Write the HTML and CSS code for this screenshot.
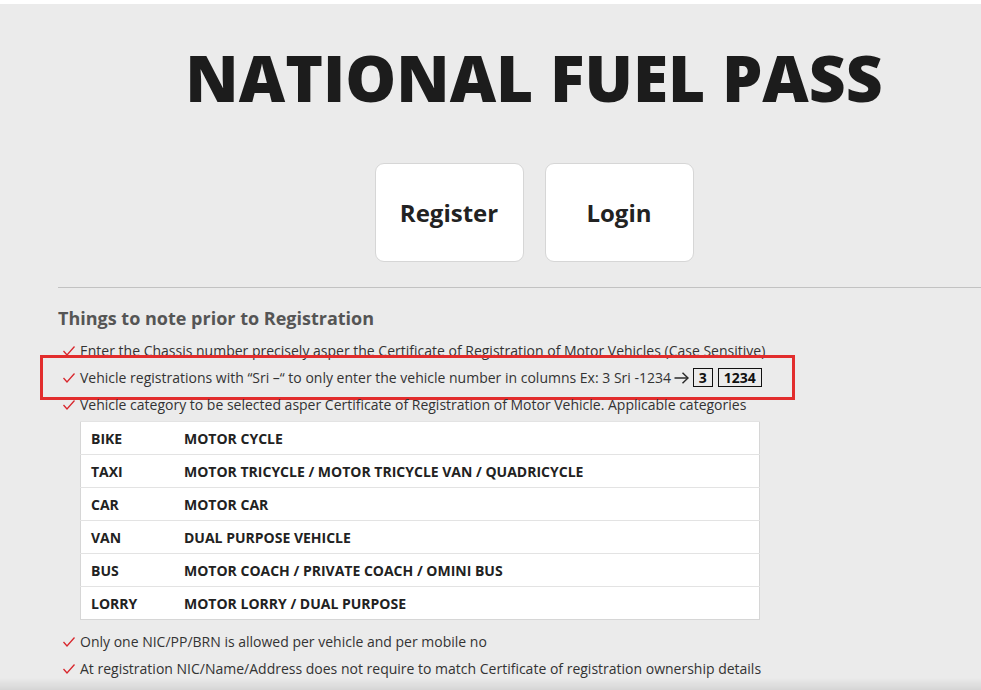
FILE: index.html
```html
<!DOCTYPE html>
<html lang="en">
<head>
<meta charset="utf-8">
<title>National Fuel Pass</title>
<link rel="stylesheet" href="styles.css">
</head>
<body>
<div class="page">
  <div class="container">
    <h1 class="title">NATIONAL FUEL PASS</h1>
    <div class="actions">
      <a class="action-btn" href="#">Register</a>
      <a class="action-btn" href="#">Login</a>
    </div>
    <hr class="divider">
    <h2 class="notes-title">Things to note prior to Registration</h2>
    <ul class="notes">
      <li class="note"><svg class="tick" viewBox="0 0 12 10"><polyline points="0.5,5 4,9 11.5,0.5"/></svg>Enter the Chassis number precisely asper the Certificate of Registration of Motor Vehicles (Case Sensitive)</li>
      <li class="note note-highlight"><svg class="tick" viewBox="0 0 12 10"><polyline points="0.5,5 4,9 11.5,0.5"/></svg>Vehicle registrations with “Sri –“ to only enter the vehicle number in columns Ex: 3 Sri -1234&nbsp;<svg class="arrow" viewBox="0 0 15 12"><line x1="0.5" y1="6" x2="14" y2="6"/><polyline points="8.5,0.8 14,6 8.5,11.2"/></svg><span class="num-box">3</span><span class="num-box">1234</span></li>
      <li class="note"><svg class="tick" viewBox="0 0 12 10"><polyline points="0.5,5 4,9 11.5,0.5"/></svg>Vehicle category to be selected asper Certificate of Registration of Motor Vehicle. Applicable categories</li>
    </ul>
    <table class="categories">
      <tr><td class="cat">BIKE</td><td>MOTOR CYCLE</td></tr>
      <tr><td class="cat">TAXI</td><td>MOTOR TRICYCLE / MOTOR TRICYCLE VAN / QUADRICYCLE</td></tr>
      <tr><td class="cat">CAR</td><td>MOTOR CAR</td></tr>
      <tr><td class="cat">VAN</td><td>DUAL PURPOSE VEHICLE</td></tr>
      <tr><td class="cat">BUS</td><td>MOTOR COACH / PRIVATE COACH / OMINI BUS</td></tr>
      <tr><td class="cat">LORRY</td><td>MOTOR LORRY / DUAL PURPOSE</td></tr>
    </table>
    <ul class="notes notes-after">
      <li class="note"><svg class="tick" viewBox="0 0 12 10"><polyline points="0.5,5 4,9 11.5,0.5"/></svg>Only one NIC/PP/BRN is allowed per vehicle and per mobile no</li>
      <li class="note"><svg class="tick" viewBox="0 0 12 10"><polyline points="0.5,5 4,9 11.5,0.5"/></svg>At registration NIC/Name/Address does not require to match Certificate of registration ownership details</li>
    </ul>
  </div>
  <div class="bottom-fade"></div>
</div>
</body>
</html>
```

FILE: styles.css
```css
html, body {
  margin: 0;
  padding: 0;
  background: #ffffff;
  overflow: hidden;
}
body {
  font-family: "Open Sans", "Liberation Sans", sans-serif;
  color: #333333;
}
.page {
  margin-top: 4px;
  background: #ebebeb;
  min-height: 686px;
  overflow: hidden;
}
.container {
  margin-left: 58px;
  width: 952px;
  padding-top: 42px;
}
.title {
  margin: 0;
  text-align: center;
  font-size: 64px;
  line-height: 64px;
  font-weight: 800;
  color: #1c1c1c;
  letter-spacing: 0;
}
.actions {
  display: flex;
  justify-content: center;
  gap: 21px;
  margin-top: 53px;
}
.action-btn {
  display: flex;
  align-items: center;
  justify-content: center;
  width: 147px;
  height: 97px;
  background: #ffffff;
  border: 1px solid #d6d6d6;
  border-radius: 9px;
  font-size: 24px;
  font-weight: 700;
  color: #222222;
  text-decoration: none;
}
.divider {
  margin: 25px 0 0 0;
  border: 0;
  border-top: 1px solid #c2c2c2;
  height: 0;
}
.notes-title {
  margin: 18px 0 0 0;
  font-size: 18px;
  line-height: 24px;
  font-weight: 700;
  color: #555555;
}
.notes {
  list-style: none;
  margin: 7px 0 0 5px;
  padding: 0;
}
.note {
  position: relative;
  display: flex;
  align-items: center;
  font-size: 14px;
  line-height: 27px;
  height: 27px;
  color: #333333;
  white-space: nowrap;
}
.tick {
  width: 12px;
  height: 10px;
  margin-right: 5px;
  flex: none;
}
.tick polyline {
  fill: none;
  stroke: #d8262c;
  stroke-width: 1.3;
}
.note-highlight::after {
  content: "";
  position: absolute;
  left: -23px;
  top: -9px;
  width: 749px;
  height: 39px;
  border: 3px solid #e22d2d;
  pointer-events: none;
}
.arrow {
  width: 15px;
  height: 12px;
  margin: 0 4px 0 -1px;
  flex: none;
}
.arrow line,
.arrow polyline {
  fill: none;
  stroke: #2a2a2a;
  stroke-width: 1.5;
}
.num-box {
  display: inline-block;
  border: 1px solid #111111;
  font-weight: 700;
  color: #111111;
  line-height: 17px;
  padding: 0 5px;
  margin-left: 5px;
}
.arrow + .num-box {
  margin-left: 0;
}
.categories {
  margin: 3px 0 0 22px;
  width: 680px;
  border-collapse: collapse;
  background: #ffffff;
  border: 1px solid #d6d6d6;
}
.categories td {
  height: 32px;
  padding: 0 10px;
  border-top: 1px solid #e3e3e3;
  font-size: 14px;
  font-weight: 700;
  color: #222222;
}
.categories .cat {
  width: 73px;
}
.notes-after {
  margin-top: 8px;
}
.bottom-fade {
  position: fixed;
  left: 0;
  right: 0;
  bottom: 0;
  height: 12px;
  background: linear-gradient(to bottom, rgba(0,0,0,0), rgba(0,0,0,0.09));
  pointer-events: none;
}
```
